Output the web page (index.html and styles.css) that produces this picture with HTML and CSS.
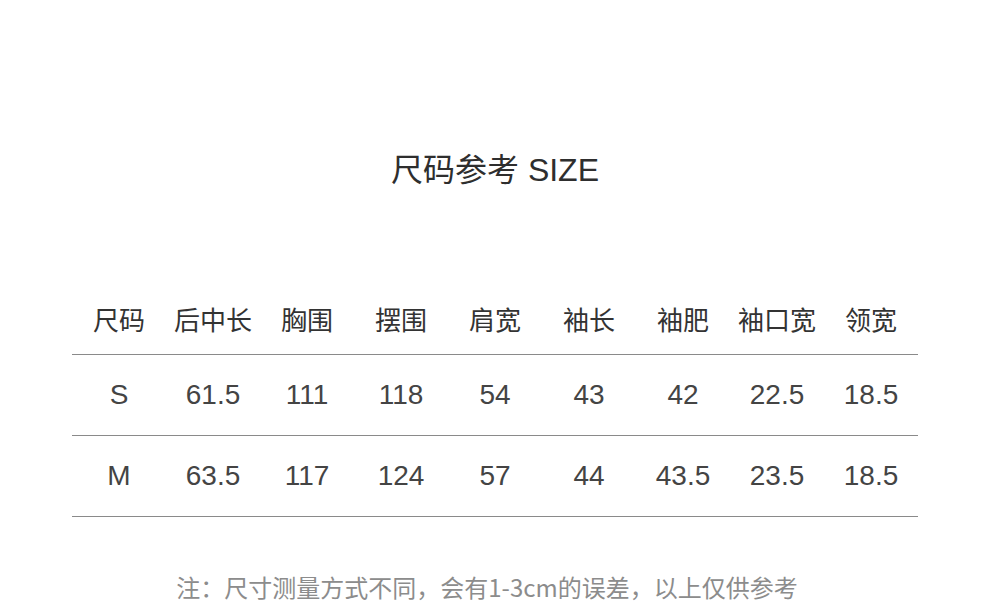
FILE: index.html
```html
<!DOCTYPE html>
<html lang="zh">
<head>
<meta charset="utf-8">
<link rel="stylesheet" href="styles.css">
</head>
<body>
<div class="page">
  <h1 class="title">尺码参考 SIZE</h1>
  <div class="table">
    <div class="row head">
      <div>尺码</div><div>后中长</div><div>胸围</div><div>摆围</div><div>肩宽</div><div>袖长</div><div>袖肥</div><div>袖口宽</div><div>领宽</div>
    </div>
    <div class="row data">
      <div>S</div><div>61.5</div><div>111</div><div>118</div><div>54</div><div>43</div><div>42</div><div>22.5</div><div>18.5</div>
    </div>
    <div class="row data">
      <div>M</div><div>63.5</div><div>117</div><div>124</div><div>57</div><div>44</div><div>43.5</div><div>23.5</div><div>18.5</div>
    </div>
  </div>
  <p class="note">注：尺寸测量方式不同，会有1-3cm的误差，以上仅供参考</p>
</div>
</body>
</html>
```
FILE: styles.css
```css
html, body {
  margin: 0;
  padding: 0;
  background: #fff;
}
.page {
  width: 990px;
  height: 601px;
  overflow: hidden;
  font-family: "Liberation Sans", "Noto Sans CJK SC", sans-serif;
  color: #333;
}
.title {
  margin: 0;
  padding-top: 150px;
  font-size: 32px;
  line-height: 40px;
  font-weight: normal;
  text-align: center;
  color: #2e2e2e;
}
.table {
  margin: 111px 72px 0;
}
.row {
  display: grid;
  grid-template-columns: repeat(9, 1fr);
  border-bottom: 1px solid #8a8a8a;
  text-align: center;
}
.head {
  font-size: 26px;
  line-height: 40px;
  padding-bottom: 13px;
  color: #333;
}
.data {
  font-size: 28px;
  height: 80px;
  align-items: center;
  color: #444;
}
.note {
  margin: 54px 0 0;
  padding-right: 16px;
  text-align: center;
  font-family: "Noto Sans CJK SC", sans-serif;
  font-size: 24px;
  line-height: 32px;
  color: #8c8c8c;
}
```
